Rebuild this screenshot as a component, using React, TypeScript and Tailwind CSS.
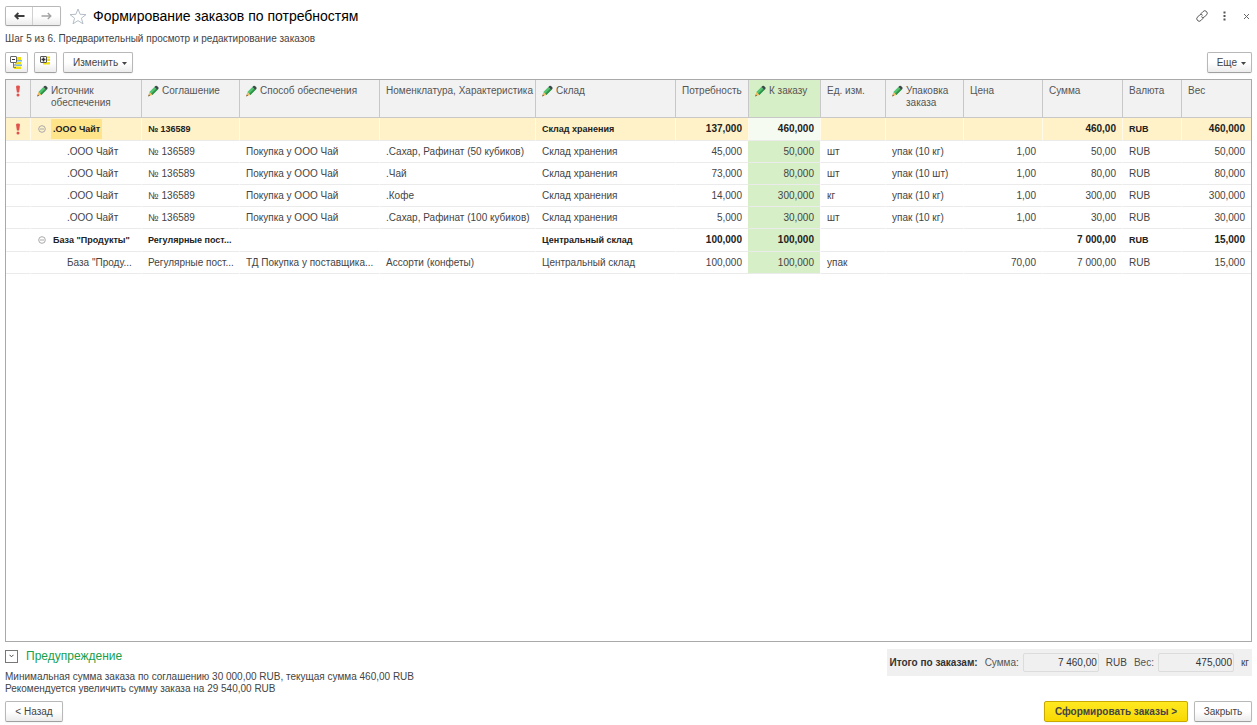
import type { ReactNode } from "react";

interface Row {
  group?: boolean;
  selected?: boolean;
  cells: string[];
}

interface Column {
  title: string;
  width: string;
  editable?: boolean;
  numeric?: boolean;
}

const columns: Column[] = [
  { title: "Источник обеспечения", width: "w-[111px]", editable: true },
  { title: "Соглашение", width: "w-[98px]", editable: true },
  { title: "Способ обеспечения", width: "w-[140px]", editable: true },
  { title: "Номенклатура, Характеристика", width: "w-[156px]" },
  { title: "Склад", width: "w-[140px]", editable: true },
  { title: "Потребность", width: "w-[73px]", numeric: true },
  { title: "К заказу", width: "w-[72px]", editable: true, numeric: true },
  { title: "Ед. изм.", width: "w-[65px]" },
  { title: "Упаковка заказа", width: "w-[78px]", editable: true },
  { title: "Цена", width: "w-[79px]", numeric: true },
  { title: "Сумма", width: "w-[80px]", numeric: true },
  { title: "Валюта", width: "w-[59px]" },
  { title: "Вес", width: "w-[70px]", numeric: true },
];

const ORDER_COLUMN = 6;

const rows: Row[] = [
  {
    group: true,
    selected: true,
    cells: [".ООО Чайт", "№ 136589", "", "", "Склад хранения", "137,000", "460,000", "", "", "", "460,00", "RUB", "460,000"],
  },
  {
    cells: [".ООО Чайт", "№ 136589", "Покупка у ООО Чай", ".Сахар, Рафинат (50 кубиков)", "Склад хранения", "45,000", "50,000", "шт", "упак (10 кг)", "1,00", "50,00", "RUB", "50,000"],
  },
  {
    cells: [".ООО Чайт", "№ 136589", "Покупка у ООО Чай", ".Чай", "Склад хранения", "73,000", "80,000", "шт", "упак (10 шт)", "1,00", "80,00", "RUB", "80,000"],
  },
  {
    cells: [".ООО Чайт", "№ 136589", "Покупка у ООО Чай", ".Кофе", "Склад хранения", "14,000", "300,000", "кг", "упак (10 кг)", "1,00", "300,00", "RUB", "300,000"],
  },
  {
    cells: [".ООО Чайт", "№ 136589", "Покупка у ООО Чай", ".Сахар, Рафинат (100 кубиков)", "Склад хранения", "5,000", "30,000", "шт", "упак (10 кг)", "1,00", "30,00", "RUB", "30,000"],
  },
  {
    group: true,
    cells: ['База "Продукты"', "Регулярные пост...", "", "", "Центральный склад", "100,000", "100,000", "", "", "", "7 000,00", "RUB", "15,000"],
  },
  {
    cells: ['База "Проду...', "Регулярные пост...", "ТД Покупка у поставщика...", "Ассорти (конфеты)", "Центральный склад", "100,000", "100,000", "упак", "", "70,00", "7 000,00", "RUB", "15,000"],
  },
];

function Pencil() {
  return (
    <svg width="11" height="12" viewBox="0 0 11 12" className="shrink-0" aria-hidden="true">
      <path d="M1.4 7 L6.4 2 L9.300 4.900 L4.300 9.900 Z" fill="#4fc46c" />
      <path d="M3.200 8.800 L8.200 3.800 L9.300 4.900 L4.300 9.900 Z" fill="#2f8f49" />
      <path d="M6.400 2 L7.400 1 Q8.200 0.400 9 1 L10.300 2.300 Q10.900 3.100 10.300 3.900 L9.300 4.900 Z" fill="#3b4a48" />
      <path d="M1.400 7 L4.300 9.900 L0.300 11.300 Z" fill="#f3b95a" />
      <path d="M0.800 9.600 L2 10.700 L0.200 11.400 Z" fill="#5a4a35" />
    </svg>
  );
}

function Exclamation() {
  return (
    <svg width="6" height="12" viewBox="0 0 6 12" className="mx-auto" aria-hidden="true">
      <path d="M1 1.4 Q1 0.4 3 0.4 Q5 0.4 5 1.4 L4.1 7.5 H1.9 Z" fill="#e2514b" />
      <circle cx="3" cy="10" r="1.5" fill="#e2514b" />
    </svg>
  );
}

function Caret() {
  return (
    <svg width="5" height="3" viewBox="0 0 5 3" className="mt-px" aria-hidden="true">
      <path d="M0 0 H5 L2.5 3 Z" fill="#444" />
    </svg>
  );
}

interface ButtonProps {
  children: ReactNode;
  className?: string;
  label?: string;
}

function Button({ children, className = "", label }: ButtonProps) {
  return (
    <button
      type="button"
      aria-label={label}
      className={`flex h-[21px] items-center justify-center rounded-xs border border-[#b8b8b8] border-b-[#a0a0a0] bg-linear-to-b from-white from-50% to-[#ececec] text-[#444] shadow-xs ${className}`}
    >
      {children}
    </button>
  );
}

function Header() {
  return (
    <header className="flex h-[22px] items-center">
      <div className="flex h-[20px] rounded-xs border border-[#b8b8b8] border-b-[#a0a0a0] bg-linear-to-b from-white from-50% to-[#ececec] shadow-xs">
        <button type="button" aria-label="Назад" className="flex w-[27px] items-center justify-center border-r border-[#d0d0d0]">
          <svg width="11" height="8" viewBox="0 0 11 8" aria-hidden="true">
            <path d="M10.5 4 H2 M4.4 1 L1.3 4 L4.4 7" stroke="#3c3c3c" strokeWidth="1.8" fill="none" />
          </svg>
        </button>
        <button type="button" aria-label="Вперед" className="flex w-[27px] items-center justify-center">
          <svg width="11" height="8" viewBox="0 0 11 8" aria-hidden="true">
            <path d="M0.5 4 H9.5 M6.8 1 L9.8 4 L6.8 7" stroke="#a3a3a3" strokeWidth="1.4" fill="none" />
          </svg>
        </button>
      </div>
      <button type="button" aria-label="В избранное" className="ml-2">
        <svg width="18" height="17" viewBox="0 0 18 17" aria-hidden="true">
          <path
            d="M9 1 L11.1 6.3 L17 6.6 L12.4 10.2 L14 15.8 L9 12.6 L4 15.8 L5.6 10.2 L1 6.6 L6.9 6.3 Z"
            fill="#fff"
            stroke="#b4bdc6"
            strokeWidth="1"
          />
        </svg>
      </button>
      <h1 className="ml-[6px] text-[14px] text-black">Формирование заказов по потребностям</h1>
      <div className="ml-auto flex items-center gap-3">
        <button type="button" aria-label="Получить ссылку">
          <svg width="12" height="12" viewBox="0 0 12 12" fill="none" stroke="#555" strokeLinecap="round" aria-hidden="true">
            <path d="M5 3.600 L7.100 1.500 A2 2 0 0 1 10.500 4.900 L8.400 7 A2 2 0 0 1 5.600 7" />
            <path d="M7 8.400 L4.900 10.500 A2 2 0 0 1 1.500 7.100 L3.600 5 A2 2 0 0 1 6.400 5" />
          </svg>
        </button>
        <button type="button" aria-label="Меню" className="px-[3px]">
          <svg width="3" height="10" viewBox="0 0 3 10" fill="#555" aria-hidden="true">
            <rect x="0.500" y="0.500" width="2" height="2" />
            <rect x="0.500" y="4" width="2" height="2" />
            <rect x="0.500" y="7.500" width="2" height="2" />
          </svg>
        </button>
        <button type="button" aria-label="Закрыть окно" className="px-[2px]">
          <svg width="7" height="7" viewBox="0 0 7 7" stroke="#666" aria-hidden="true">
            <path d="M1 1 L6 6 M6 1 L1 6" />
          </svg>
        </button>
      </div>
    </header>
  );
}

function Toolbar() {
  return (
    <div className="flex items-center">
      <Button label="Свернуть все" className="w-[23px]">
        <svg width="13" height="14" viewBox="0 0 13 14" aria-hidden="true">
          <rect x="5" y="1" width="6" height="3" fill="#f2e10c" />
          <rect x="6" y="4" width="6" height="1.500" fill="#6fb5e0" />
          <rect x="5" y="6" width="6" height="2.500" fill="#f2e10c" />
          <rect x="6" y="8.500" width="6" height="1.500" fill="#6fb5e0" />
          <rect x="4" y="10.500" width="7" height="2.500" fill="#f2e10c" />
          <path d="M3.500 7 V11.500 H6 M3.500 9 H6" stroke="#777" fill="none" />
          <rect x="0.500" y="0.500" width="6" height="6" rx="0.500" fill="#fff" stroke="#666" />
          <path d="M2 3.500 H5" stroke="#333" />
        </svg>
      </Button>
      <Button label="Развернуть все" className="ml-[6px] w-[23px]">
        <svg width="13" height="14" viewBox="0 0 13 14" aria-hidden="true">
          <rect x="7" y="0.500" width="4" height="2" fill="#f2e10c" />
          <rect x="7" y="3" width="4" height="2" fill="#f2e10c" />
          <rect x="4" y="6" width="7" height="2.500" fill="#f2e10c" />
          <rect x="1.500" y="0.500" width="6" height="6" rx="0.500" fill="#fff" stroke="#555" />
          <path d="M2.500 3.500 H6.500 M4.500 1.500 V5.500" stroke="#333" strokeWidth="1.500" />
        </svg>
      </Button>
      <Button className="ml-[6px] gap-1 pr-[5px] pl-[9px]">
        Изменить
        <Caret />
      </Button>
      <Button className="ml-auto gap-1 pr-[5px] pl-[9px]">
        Еще
        <Caret />
      </Button>
    </div>
  );
}

function HeadCell({ column, index }: { column: Column; index: number }) {
  const order = index === ORDER_COLUMN;
  return (
    <th
      className={`border-b border-l border-[#c8c8c8] px-[6px] pt-[5px] text-left align-top font-normal ${
        order ? "bg-[#d6efc7]" : ""
      }`}
    >
      <div className="flex gap-[3px]">
        {column.editable && <Pencil />}
        <span className={column.editable ? "" : "whitespace-nowrap"}>{column.title}</span>
      </div>
    </th>
  );
}

function cellBackground(row: Row, index: number) {
  if (index !== ORDER_COLUMN) return "";
  return row.selected ? "bg-[#f5fbf1]" : "bg-[#d6efc7]";
}

function SourceCell({ row }: { row: Row }) {
  if (!row.group) return <td className="overflow-hidden pl-[36px]">{row.cells[0]}</td>;
  return (
    <td className="overflow-hidden">
      <div className="flex h-[20px] items-center text-[9px] whitespace-nowrap">
        <button type="button" aria-label="Свернуть" className="ml-[7px]">
          <svg width="8" height="8" viewBox="0 0 8 8" fill="none" stroke="#a8a8a8" aria-hidden="true">
            <circle cx="4" cy="4" r="3.300" />
            <path d="M2 4 H6" />
          </svg>
        </button>
        <span className={`ml-[5px] flex h-full items-center px-[2px] ${row.selected ? "bg-[#ffe48a]" : ""}`}>
          {row.cells[0]}
        </span>
      </div>
    </td>
  );
}

function OrdersTable() {
  return (
    <div className="min-h-0 flex-1 overflow-hidden border border-[#a9a9a9]">
      <table className="w-full table-fixed border-separate border-spacing-0 text-[10px] leading-3 text-[#444]">
        <colgroup>
          <col className="w-[24px]" />
          {columns.map((column) => (
            <col key={column.title} className={column.width} />
          ))}
        </colgroup>
        <thead>
          <tr className="h-[38px] bg-[#f2f2f2] text-[#555]">
            <th className="border-b border-[#c8c8c8] pt-[5px] align-top">
              <Exclamation />
            </th>
            {columns.map((column, index) => (
              <HeadCell key={column.title} column={column} index={index} />
            ))}
          </tr>
        </thead>
        <tbody>
          {rows.map((row, rowIndex) => (
            <tr
              key={rowIndex}
              className={`[&>td]:border-b [&>td]:border-b-[#ebebeb] [&>td+td]:border-l ${
                row.group ? "h-[23px] font-bold text-[#222] [&>td]:pb-px" : "h-[22px] [&>td]:pt-px"
              } ${row.selected ? "bg-[#fff2c8] [&>td+td]:border-l-[#fffaea]" : "[&>td+td]:border-l-transparent"}`}
            >
              <td>{row.selected && <Exclamation />}</td>
              <SourceCell row={row} />
              {row.cells.slice(1).map((cell, i) => (
                <td
                  key={i}
                  className={`overflow-hidden px-[6px] whitespace-nowrap ${
                    columns[i + 1].numeric ? "text-right" : row.group ? "text-[9px]" : ""
                  } ${cellBackground(row, i + 1)}`}
                >
                  {cell}
                </td>
              ))}
            </tr>
          ))}
        </tbody>
      </table>
    </div>
  );
}

function Totals() {
  const field = "h-[19px] w-[76px] rounded-xs border border-[#dcdcdc] bg-transparent px-px text-right text-[#333]";
  return (
    <div className="flex h-[27px] items-center bg-[#f0f0f0] px-[3px] text-[#555]">
      <span className="font-bold text-[#333]">Итого по заказам:</span>
      <label htmlFor="sum" className="ml-[7px]">Сумма:</label>
      <input id="sum" readOnly value="7 460,00" className={`ml-1 ${field}`} />
      <span className="ml-[7px] text-[#444]">RUB</span>
      <label htmlFor="weight" className="ml-[7px]">Вес:</label>
      <input id="weight" readOnly value="475,000" className={`ml-1 ${field}`} />
      <span className="ml-[7px] text-[#444]">кг</span>
    </div>
  );
}

export default function App() {
  return (
    <div className="flex h-screen flex-col bg-white px-[5px] pt-[5px] pb-[3px] font-['Liberation_Sans',Arial,sans-serif] text-[10px] leading-3 text-[#444]">
      <Header />
      <p className="mt-[6px] mb-[7px]">Шаг 5 из 6. Предварительный просмотр и редактирование заказов</p>
      <Toolbar />
      <main className="mt-[6px] flex min-h-0 flex-1 flex-col">
        <OrdersTable />
      </main>
      <footer>
        <div className="flex items-start justify-between pt-[7px]">
          <section>
            <div className="flex h-[14px] items-center gap-2">
              <button type="button" aria-label="Свернуть предупреждение" className="flex size-[13px] items-center justify-center border border-[#777]">
                <svg width="5" height="4" viewBox="0 0 5 4" fill="none" stroke="#444" aria-hidden="true">
                  <path d="M0.500 0.800 L2.500 2.800 L4.500 0.800" />
                </svg>
              </button>
              <h2 className="text-[12px] text-[#18a04c]">Предупреждение</h2>
            </div>
            <p className="mt-2">
              Минимальная сумма заказа по соглашению 30 000,00 RUB, текущая сумма 460,00 RUB
              <br />
              Рекомендуется увеличить сумму заказа на 29 540,00 RUB
            </p>
          </section>
          <Totals />
        </div>
        <div className="mt-[6px] flex gap-[6px]">
          <Button className="w-[58px]">&lt; Назад</Button>
          <button
            type="button"
            className="ml-auto h-[21px] w-[144px] rounded-xs border border-[#c9a800] bg-linear-to-b from-[#ffe91f] to-[#f8d800] font-bold text-[#444] shadow-xs"
          >
            Сформировать заказы &gt;
          </button>
          <Button className="w-[58px]">Закрыть</Button>
        </div>
      </footer>
    </div>
  );
}
